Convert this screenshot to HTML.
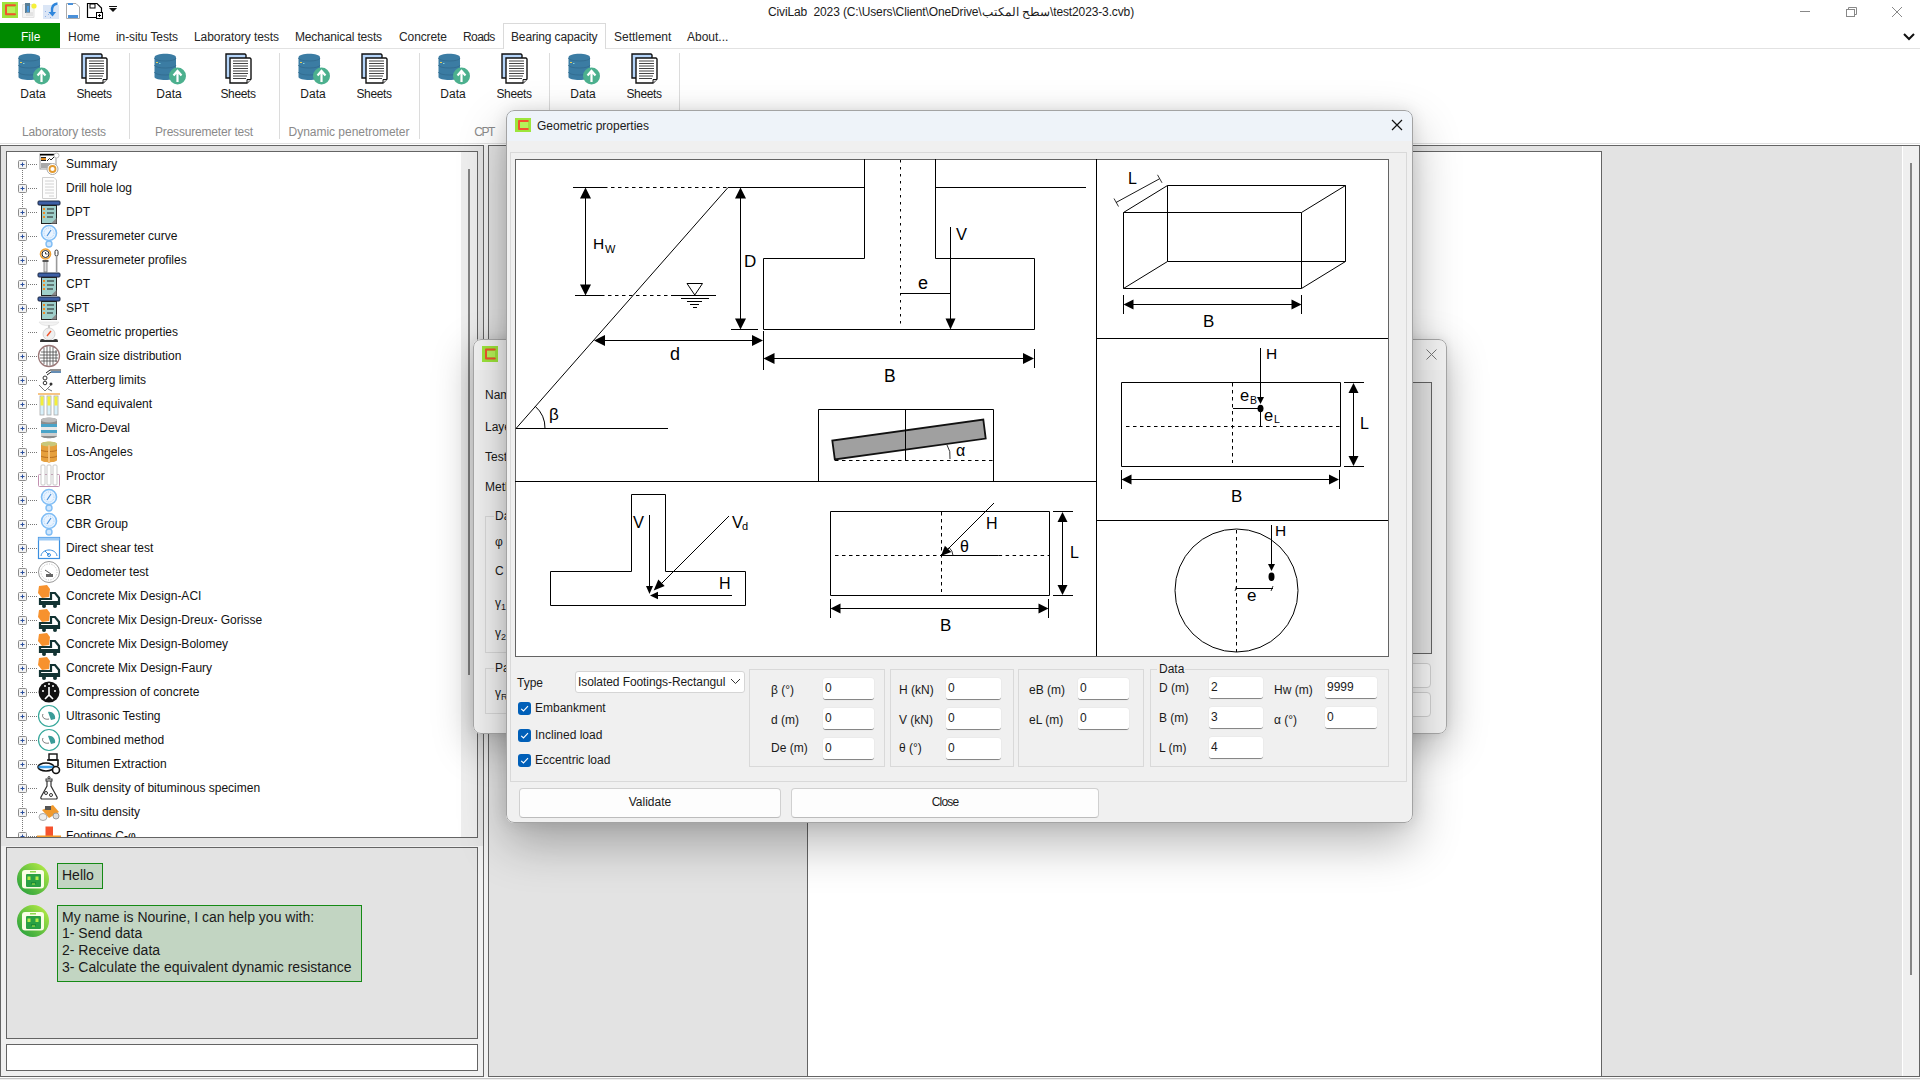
<!DOCTYPE html><html><head><meta charset="utf-8"><style>
html,body{margin:0;padding:0}
body{width:1920px;height:1080px;position:relative;overflow:hidden;background:#fff;font-family:'Liberation Sans',sans-serif}
.t{position:absolute;white-space:nowrap}
.b{position:absolute;box-sizing:border-box}
svg{position:absolute;overflow:visible}
</style></head><body>
<svg style="left:0;top:0" width="120" height="22" viewBox="0 0 120 22">
<rect x="2" y="2" width="16" height="16" fill="#9de53c"/>
<rect x="7" y="7" width="8" height="6" fill="#b6f25a"/>
<path d="M15 5.3 H6 V14.3 H15" fill="none" stroke="#f2532e" stroke-width="2" stroke-linecap="round" stroke-linejoin="round"/>
<path d="M22.5 4.5 H34 V17.5 H22.5 Z" fill="#f3f3f3" stroke="#e2e2e2"/>
<rect x="25" y="3" width="5" height="10" fill="#5a7f96"/><rect x="27" y="6" width="2" height="6" fill="#4a9ae0"/>
<path d="M26 15 H33 M26 13 H33" stroke="#ccc" stroke-width="0.8"/>
<circle cx="34" cy="6" r="2.6" fill="#f5f03a"/>
<rect x="43" y="5" width="16" height="14" fill="#dbe6f6"/>
<path d="M45 11 l1 1 M48 14 l1 1 M45 16 l1 1 M50 17 l1 1" stroke="#8fb0e8" stroke-width="1"/>
<path d="M57.5 3.5 C53 4 51.5 7 52 12" fill="none" stroke="#2f86dc" stroke-width="2.4"/>
<path d="M48.5 12 L52.5 16.5 L56 12 Z" fill="#2f86dc"/>
<path d="M66.5 3.5 H76 L79.5 7 V18.5 H66.5 Z" fill="#fff" stroke="#aaa"/>
<rect x="68" y="3" width="5" height="2" fill="#4a90d9"/>
<rect x="68" y="15" width="10" height="3" fill="#4a90d9"/>
<path d="M87.5 3.5 H97 L101.5 8 V17.5 H87.5 Z" fill="#fff" stroke="#000" stroke-width="1.2"/>
<rect x="90" y="4" width="5" height="4" fill="none" stroke="#000"/>
<rect x="96.5" y="12.5" width="6" height="6" fill="#fff" stroke="#000"/>
<path d="M99.5 14 V17 M98 15.5 H101" stroke="#000"/>
<path d="M109 8 H117 L113 12 Z" fill="#111"/><rect x="109" y="6" width="8" height="1" fill="#111"/>
</svg>
<div class="t" style="left:768px;top:6px;font-size:12px;line-height:12px;color:#1a1a1a;letter-spacing:-0.13px">CiviLab&nbsp; 2023 (C:\Users\Client\OneDrive\<span dir="rtl">سطح المكتب</span>\test2023-3.cvb)</div>
<svg style="left:1790px;top:0" width="130" height="24" viewBox="1790 0 130 24">
<path d="M1800 11.5 H1810" stroke="#888" stroke-width="1"/>
<rect x="1846.5" y="9.5" width="8" height="7" fill="none" stroke="#888"/>
<path d="M1848.5 9.5 V7.5 H1856.5 V14.5 H1854.5" fill="none" stroke="#888"/>
<path d="M1892 7 L1902 17 M1902 7 L1892 17" stroke="#888" stroke-width="1"/>
</svg>
<div class="b" style="left:0px;top:23px;width:60px;height:25px;background:#008a00"></div>
<div class="t" style="left:21px;top:31px;font-size:12px;line-height:12px;color:#fff;">File</div>
<div class="b" style="left:0px;top:48px;width:1920px;height:1px;background:#e2e2e2"></div>
<div class="b" style="left:503px;top:23px;width:103px;height:26px;background:#fff;border:1px solid #dadada;border-bottom:none"></div>
<div class="t" style="left:68px;top:31px;font-size:12px;line-height:12px;color:#262626;letter-spacing:0px">Home</div>
<div class="t" style="left:116px;top:31px;font-size:12px;line-height:12px;color:#262626;letter-spacing:-0.09px">in-situ Tests</div>
<div class="t" style="left:194px;top:31px;font-size:12px;line-height:12px;color:#262626;letter-spacing:-0.07px">Laboratory tests</div>
<div class="t" style="left:295px;top:31px;font-size:12px;line-height:12px;color:#262626;letter-spacing:-0.15px">Mechanical tests</div>
<div class="t" style="left:399px;top:31px;font-size:12px;line-height:12px;color:#262626;letter-spacing:-0.1px">Concrete</div>
<div class="t" style="left:463px;top:31px;font-size:12px;line-height:12px;color:#262626;letter-spacing:-0.6px">Roads</div>
<div class="t" style="left:511px;top:31px;font-size:12px;line-height:12px;color:#262626;letter-spacing:-0.14px">Bearing capacity</div>
<div class="t" style="left:614px;top:31px;font-size:12px;line-height:12px;color:#262626;letter-spacing:0px">Settlement</div>
<div class="t" style="left:687px;top:31px;font-size:12px;line-height:12px;color:#262626;letter-spacing:0px">About...</div>
<svg style="left:1901px;top:29px" width="16" height="14" viewBox="0 0 16 14"><path d="M3 5 L8 10 L13 5" fill="none" stroke="#111" stroke-width="2"/></svg>
<svg style="left:18px;top:53px" width="34" height="34" viewBox="0 0 34 34">
<path d="M0.5 4.5 C0.5 -0.5 22 -0.5 22 4.5 V24 C22 28 0.5 28 0.5 24 Z" fill="#3b7ca3"/>
<path d="M0.5 5 C0.5 9 22 9 22 5" fill="none" stroke="#336e92" stroke-width="1"/>
<path d="M0.5 12 C0.5 16 22 16 22 12" fill="none" stroke="#336e92" stroke-width="1"/>
<path d="M0.5 19 C0.5 23 22 23 22 19" fill="none" stroke="#336e92" stroke-width="1"/>
<rect x="2" y="9" width="2" height="1" fill="#e8d25a"/><rect x="5" y="10" width="1.5" height="1" fill="#7fd0e0"/>
<circle cx="23.5" cy="23" r="8.5" fill="#4cb08e"/>
<path d="M23.5 29 V19 M19.5 22.5 L23.5 18 L27.5 22.5" fill="none" stroke="#fff" stroke-width="2.2"/>
</svg>
<svg style="left:81px;top:53px" width="30" height="34" viewBox="0 0 30 34">
<path d="M1 1 H20 L21 2 V25 H1 Z" fill="#b5d5fa" stroke="#111" stroke-width="1.4"/>
<path d="M5 5 H25 L26 6 V26 L22 30 H5 Z" fill="#fff" stroke="#111" stroke-width="1.4"/>
<path d="M8 8 H23 M8 10.5 H23 M8 13 H23 M8 15.5 H23 M8 18 H23 M8 20.5 H23 M8 23 H22 M8 25.5 H21" stroke="#444" stroke-width="1.2"/>
<path d="M22 30 V26.5 H26" fill="#ddd" stroke="#111" stroke-width="1"/>
</svg>
<div class="t" style="left:-167px;width:400px;text-align:center;top:88px;font-size:12px;line-height:12px;color:#1a1a1a;">Data</div>
<div class="t" style="left:-106px;width:400px;text-align:center;top:88px;font-size:12px;line-height:12px;color:#1a1a1a;letter-spacing:-0.4px">Sheets</div>
<svg style="left:154px;top:53px" width="34" height="34" viewBox="0 0 34 34">
<path d="M0.5 4.5 C0.5 -0.5 22 -0.5 22 4.5 V24 C22 28 0.5 28 0.5 24 Z" fill="#3b7ca3"/>
<path d="M0.5 5 C0.5 9 22 9 22 5" fill="none" stroke="#336e92" stroke-width="1"/>
<path d="M0.5 12 C0.5 16 22 16 22 12" fill="none" stroke="#336e92" stroke-width="1"/>
<path d="M0.5 19 C0.5 23 22 23 22 19" fill="none" stroke="#336e92" stroke-width="1"/>
<rect x="2" y="9" width="2" height="1" fill="#e8d25a"/><rect x="5" y="10" width="1.5" height="1" fill="#7fd0e0"/>
<circle cx="23.5" cy="23" r="8.5" fill="#4cb08e"/>
<path d="M23.5 29 V19 M19.5 22.5 L23.5 18 L27.5 22.5" fill="none" stroke="#fff" stroke-width="2.2"/>
</svg>
<svg style="left:225px;top:53px" width="30" height="34" viewBox="0 0 30 34">
<path d="M1 1 H20 L21 2 V25 H1 Z" fill="#b5d5fa" stroke="#111" stroke-width="1.4"/>
<path d="M5 5 H25 L26 6 V26 L22 30 H5 Z" fill="#fff" stroke="#111" stroke-width="1.4"/>
<path d="M8 8 H23 M8 10.5 H23 M8 13 H23 M8 15.5 H23 M8 18 H23 M8 20.5 H23 M8 23 H22 M8 25.5 H21" stroke="#444" stroke-width="1.2"/>
<path d="M22 30 V26.5 H26" fill="#ddd" stroke="#111" stroke-width="1"/>
</svg>
<div class="t" style="left:-31px;width:400px;text-align:center;top:88px;font-size:12px;line-height:12px;color:#1a1a1a;">Data</div>
<div class="t" style="left:38px;width:400px;text-align:center;top:88px;font-size:12px;line-height:12px;color:#1a1a1a;letter-spacing:-0.4px">Sheets</div>
<svg style="left:298px;top:53px" width="34" height="34" viewBox="0 0 34 34">
<path d="M0.5 4.5 C0.5 -0.5 22 -0.5 22 4.5 V24 C22 28 0.5 28 0.5 24 Z" fill="#3b7ca3"/>
<path d="M0.5 5 C0.5 9 22 9 22 5" fill="none" stroke="#336e92" stroke-width="1"/>
<path d="M0.5 12 C0.5 16 22 16 22 12" fill="none" stroke="#336e92" stroke-width="1"/>
<path d="M0.5 19 C0.5 23 22 23 22 19" fill="none" stroke="#336e92" stroke-width="1"/>
<rect x="2" y="9" width="2" height="1" fill="#e8d25a"/><rect x="5" y="10" width="1.5" height="1" fill="#7fd0e0"/>
<circle cx="23.5" cy="23" r="8.5" fill="#4cb08e"/>
<path d="M23.5 29 V19 M19.5 22.5 L23.5 18 L27.5 22.5" fill="none" stroke="#fff" stroke-width="2.2"/>
</svg>
<svg style="left:361px;top:53px" width="30" height="34" viewBox="0 0 30 34">
<path d="M1 1 H20 L21 2 V25 H1 Z" fill="#b5d5fa" stroke="#111" stroke-width="1.4"/>
<path d="M5 5 H25 L26 6 V26 L22 30 H5 Z" fill="#fff" stroke="#111" stroke-width="1.4"/>
<path d="M8 8 H23 M8 10.5 H23 M8 13 H23 M8 15.5 H23 M8 18 H23 M8 20.5 H23 M8 23 H22 M8 25.5 H21" stroke="#444" stroke-width="1.2"/>
<path d="M22 30 V26.5 H26" fill="#ddd" stroke="#111" stroke-width="1"/>
</svg>
<div class="t" style="left:113px;width:400px;text-align:center;top:88px;font-size:12px;line-height:12px;color:#1a1a1a;">Data</div>
<div class="t" style="left:174px;width:400px;text-align:center;top:88px;font-size:12px;line-height:12px;color:#1a1a1a;letter-spacing:-0.4px">Sheets</div>
<svg style="left:438px;top:53px" width="34" height="34" viewBox="0 0 34 34">
<path d="M0.5 4.5 C0.5 -0.5 22 -0.5 22 4.5 V24 C22 28 0.5 28 0.5 24 Z" fill="#3b7ca3"/>
<path d="M0.5 5 C0.5 9 22 9 22 5" fill="none" stroke="#336e92" stroke-width="1"/>
<path d="M0.5 12 C0.5 16 22 16 22 12" fill="none" stroke="#336e92" stroke-width="1"/>
<path d="M0.5 19 C0.5 23 22 23 22 19" fill="none" stroke="#336e92" stroke-width="1"/>
<rect x="2" y="9" width="2" height="1" fill="#e8d25a"/><rect x="5" y="10" width="1.5" height="1" fill="#7fd0e0"/>
<circle cx="23.5" cy="23" r="8.5" fill="#4cb08e"/>
<path d="M23.5 29 V19 M19.5 22.5 L23.5 18 L27.5 22.5" fill="none" stroke="#fff" stroke-width="2.2"/>
</svg>
<svg style="left:501px;top:53px" width="30" height="34" viewBox="0 0 30 34">
<path d="M1 1 H20 L21 2 V25 H1 Z" fill="#b5d5fa" stroke="#111" stroke-width="1.4"/>
<path d="M5 5 H25 L26 6 V26 L22 30 H5 Z" fill="#fff" stroke="#111" stroke-width="1.4"/>
<path d="M8 8 H23 M8 10.5 H23 M8 13 H23 M8 15.5 H23 M8 18 H23 M8 20.5 H23 M8 23 H22 M8 25.5 H21" stroke="#444" stroke-width="1.2"/>
<path d="M22 30 V26.5 H26" fill="#ddd" stroke="#111" stroke-width="1"/>
</svg>
<div class="t" style="left:253px;width:400px;text-align:center;top:88px;font-size:12px;line-height:12px;color:#1a1a1a;">Data</div>
<div class="t" style="left:314px;width:400px;text-align:center;top:88px;font-size:12px;line-height:12px;color:#1a1a1a;letter-spacing:-0.4px">Sheets</div>
<svg style="left:568px;top:53px" width="34" height="34" viewBox="0 0 34 34">
<path d="M0.5 4.5 C0.5 -0.5 22 -0.5 22 4.5 V24 C22 28 0.5 28 0.5 24 Z" fill="#3b7ca3"/>
<path d="M0.5 5 C0.5 9 22 9 22 5" fill="none" stroke="#336e92" stroke-width="1"/>
<path d="M0.5 12 C0.5 16 22 16 22 12" fill="none" stroke="#336e92" stroke-width="1"/>
<path d="M0.5 19 C0.5 23 22 23 22 19" fill="none" stroke="#336e92" stroke-width="1"/>
<rect x="2" y="9" width="2" height="1" fill="#e8d25a"/><rect x="5" y="10" width="1.5" height="1" fill="#7fd0e0"/>
<circle cx="23.5" cy="23" r="8.5" fill="#4cb08e"/>
<path d="M23.5 29 V19 M19.5 22.5 L23.5 18 L27.5 22.5" fill="none" stroke="#fff" stroke-width="2.2"/>
</svg>
<svg style="left:631px;top:53px" width="30" height="34" viewBox="0 0 30 34">
<path d="M1 1 H20 L21 2 V25 H1 Z" fill="#b5d5fa" stroke="#111" stroke-width="1.4"/>
<path d="M5 5 H25 L26 6 V26 L22 30 H5 Z" fill="#fff" stroke="#111" stroke-width="1.4"/>
<path d="M8 8 H23 M8 10.5 H23 M8 13 H23 M8 15.5 H23 M8 18 H23 M8 20.5 H23 M8 23 H22 M8 25.5 H21" stroke="#444" stroke-width="1.2"/>
<path d="M22 30 V26.5 H26" fill="#ddd" stroke="#111" stroke-width="1"/>
</svg>
<div class="t" style="left:383px;width:400px;text-align:center;top:88px;font-size:12px;line-height:12px;color:#1a1a1a;">Data</div>
<div class="t" style="left:444px;width:400px;text-align:center;top:88px;font-size:12px;line-height:12px;color:#1a1a1a;letter-spacing:-0.4px">Sheets</div>
<div class="b" style="left:129px;top:53px;width:1px;height:86px;background:#dcdcdc"></div>
<div class="b" style="left:279px;top:53px;width:1px;height:86px;background:#dcdcdc"></div>
<div class="b" style="left:419px;top:53px;width:1px;height:86px;background:#dcdcdc"></div>
<div class="b" style="left:549px;top:53px;width:1px;height:86px;background:#dcdcdc"></div>
<div class="b" style="left:679px;top:53px;width:1px;height:86px;background:#dcdcdc"></div>
<div class="t" style="left:-136px;width:400px;text-align:center;top:126px;font-size:12px;line-height:12px;color:#8a8a8a;letter-spacing:-0.13px">Laboratory tests</div>
<div class="t" style="left:4px;width:400px;text-align:center;top:126px;font-size:12px;line-height:12px;color:#8a8a8a;letter-spacing:-0.19px">Pressuremeter test</div>
<div class="t" style="left:149px;width:400px;text-align:center;top:126px;font-size:12px;line-height:12px;color:#8a8a8a;letter-spacing:-0.02px">Dynamic penetrometer</div>
<div class="t" style="left:284px;width:400px;text-align:center;top:126px;font-size:12px;line-height:12px;color:#8a8a8a;letter-spacing:-1.5px">CPT</div>
<div class="b" style="left:0px;top:143px;width:1920px;height:1px;background:#e0e0e0"></div>
<div class="b" style="left:0px;top:145px;width:1920px;height:935px;background:#f0f0f0"></div>
<div class="b" style="left:0px;top:145px;width:484px;height:932px;background:#e3e3e3;border:1px solid #646464;border-right:1px solid #646464"></div>
<div class="b" style="left:1px;top:846px;width:482px;height:230px;background:#f0f0f0"></div>
<div class="b" style="left:6px;top:151px;width:472px;height:687px;background:#fff;border:1px solid #646464"></div>
<div class="b" style="left:461px;top:152px;width:16px;height:685px;background:#eeeeee"></div>
<div class="b" style="left:468px;top:169px;width:2px;height:506px;background:#858585"></div>
<div class="b" style="left:7px;top:152px;width:454px;height:685px;overflow:hidden">
<svg style="left:0;top:0" width="454" height="685" viewBox="7 152 454 685"><path d="M22.5 170 V840" stroke="#777" stroke-width="1" stroke-dasharray="1 1"/><path d="M28 164.5 H37" stroke="#777" stroke-width="1" stroke-dasharray="1 1"/><rect x="18.5" y="160.5" width="8" height="8" rx="1" fill="#f4f4f4" stroke="#8d8d8d"/><path d="M20.5 164.5 H24.5 M22.5 162.5 V166.5" stroke="#2a4f9e" stroke-width="1"/><path d="M28 188.5 H37" stroke="#777" stroke-width="1" stroke-dasharray="1 1"/><rect x="18.5" y="184.5" width="8" height="8" rx="1" fill="#f4f4f4" stroke="#8d8d8d"/><path d="M20.5 188.5 H24.5 M22.5 186.5 V190.5" stroke="#2a4f9e" stroke-width="1"/><path d="M28 212.5 H37" stroke="#777" stroke-width="1" stroke-dasharray="1 1"/><rect x="18.5" y="208.5" width="8" height="8" rx="1" fill="#f4f4f4" stroke="#8d8d8d"/><path d="M20.5 212.5 H24.5 M22.5 210.5 V214.5" stroke="#2a4f9e" stroke-width="1"/><path d="M28 236.5 H37" stroke="#777" stroke-width="1" stroke-dasharray="1 1"/><rect x="18.5" y="232.5" width="8" height="8" rx="1" fill="#f4f4f4" stroke="#8d8d8d"/><path d="M20.5 236.5 H24.5 M22.5 234.5 V238.5" stroke="#2a4f9e" stroke-width="1"/><path d="M28 260.5 H37" stroke="#777" stroke-width="1" stroke-dasharray="1 1"/><rect x="18.5" y="256.5" width="8" height="8" rx="1" fill="#f4f4f4" stroke="#8d8d8d"/><path d="M20.5 260.5 H24.5 M22.5 258.5 V262.5" stroke="#2a4f9e" stroke-width="1"/><path d="M28 284.5 H37" stroke="#777" stroke-width="1" stroke-dasharray="1 1"/><rect x="18.5" y="280.5" width="8" height="8" rx="1" fill="#f4f4f4" stroke="#8d8d8d"/><path d="M20.5 284.5 H24.5 M22.5 282.5 V286.5" stroke="#2a4f9e" stroke-width="1"/><path d="M28 308.5 H37" stroke="#777" stroke-width="1" stroke-dasharray="1 1"/><rect x="18.5" y="304.5" width="8" height="8" rx="1" fill="#f4f4f4" stroke="#8d8d8d"/><path d="M20.5 308.5 H24.5 M22.5 306.5 V310.5" stroke="#2a4f9e" stroke-width="1"/><path d="M28 332.5 H37" stroke="#777" stroke-width="1" stroke-dasharray="1 1"/><path d="M28 356.5 H37" stroke="#777" stroke-width="1" stroke-dasharray="1 1"/><rect x="18.5" y="352.5" width="8" height="8" rx="1" fill="#f4f4f4" stroke="#8d8d8d"/><path d="M20.5 356.5 H24.5 M22.5 354.5 V358.5" stroke="#2a4f9e" stroke-width="1"/><path d="M28 380.5 H37" stroke="#777" stroke-width="1" stroke-dasharray="1 1"/><rect x="18.5" y="376.5" width="8" height="8" rx="1" fill="#f4f4f4" stroke="#8d8d8d"/><path d="M20.5 380.5 H24.5 M22.5 378.5 V382.5" stroke="#2a4f9e" stroke-width="1"/><path d="M28 404.5 H37" stroke="#777" stroke-width="1" stroke-dasharray="1 1"/><rect x="18.5" y="400.5" width="8" height="8" rx="1" fill="#f4f4f4" stroke="#8d8d8d"/><path d="M20.5 404.5 H24.5 M22.5 402.5 V406.5" stroke="#2a4f9e" stroke-width="1"/><path d="M28 428.5 H37" stroke="#777" stroke-width="1" stroke-dasharray="1 1"/><rect x="18.5" y="424.5" width="8" height="8" rx="1" fill="#f4f4f4" stroke="#8d8d8d"/><path d="M20.5 428.5 H24.5 M22.5 426.5 V430.5" stroke="#2a4f9e" stroke-width="1"/><path d="M28 452.5 H37" stroke="#777" stroke-width="1" stroke-dasharray="1 1"/><rect x="18.5" y="448.5" width="8" height="8" rx="1" fill="#f4f4f4" stroke="#8d8d8d"/><path d="M20.5 452.5 H24.5 M22.5 450.5 V454.5" stroke="#2a4f9e" stroke-width="1"/><path d="M28 476.5 H37" stroke="#777" stroke-width="1" stroke-dasharray="1 1"/><rect x="18.5" y="472.5" width="8" height="8" rx="1" fill="#f4f4f4" stroke="#8d8d8d"/><path d="M20.5 476.5 H24.5 M22.5 474.5 V478.5" stroke="#2a4f9e" stroke-width="1"/><path d="M28 500.5 H37" stroke="#777" stroke-width="1" stroke-dasharray="1 1"/><rect x="18.5" y="496.5" width="8" height="8" rx="1" fill="#f4f4f4" stroke="#8d8d8d"/><path d="M20.5 500.5 H24.5 M22.5 498.5 V502.5" stroke="#2a4f9e" stroke-width="1"/><path d="M28 524.5 H37" stroke="#777" stroke-width="1" stroke-dasharray="1 1"/><rect x="18.5" y="520.5" width="8" height="8" rx="1" fill="#f4f4f4" stroke="#8d8d8d"/><path d="M20.5 524.5 H24.5 M22.5 522.5 V526.5" stroke="#2a4f9e" stroke-width="1"/><path d="M28 548.5 H37" stroke="#777" stroke-width="1" stroke-dasharray="1 1"/><rect x="18.5" y="544.5" width="8" height="8" rx="1" fill="#f4f4f4" stroke="#8d8d8d"/><path d="M20.5 548.5 H24.5 M22.5 546.5 V550.5" stroke="#2a4f9e" stroke-width="1"/><path d="M28 572.5 H37" stroke="#777" stroke-width="1" stroke-dasharray="1 1"/><rect x="18.5" y="568.5" width="8" height="8" rx="1" fill="#f4f4f4" stroke="#8d8d8d"/><path d="M20.5 572.5 H24.5 M22.5 570.5 V574.5" stroke="#2a4f9e" stroke-width="1"/><path d="M28 596.5 H37" stroke="#777" stroke-width="1" stroke-dasharray="1 1"/><rect x="18.5" y="592.5" width="8" height="8" rx="1" fill="#f4f4f4" stroke="#8d8d8d"/><path d="M20.5 596.5 H24.5 M22.5 594.5 V598.5" stroke="#2a4f9e" stroke-width="1"/><path d="M28 620.5 H37" stroke="#777" stroke-width="1" stroke-dasharray="1 1"/><rect x="18.5" y="616.5" width="8" height="8" rx="1" fill="#f4f4f4" stroke="#8d8d8d"/><path d="M20.5 620.5 H24.5 M22.5 618.5 V622.5" stroke="#2a4f9e" stroke-width="1"/><path d="M28 644.5 H37" stroke="#777" stroke-width="1" stroke-dasharray="1 1"/><rect x="18.5" y="640.5" width="8" height="8" rx="1" fill="#f4f4f4" stroke="#8d8d8d"/><path d="M20.5 644.5 H24.5 M22.5 642.5 V646.5" stroke="#2a4f9e" stroke-width="1"/><path d="M28 668.5 H37" stroke="#777" stroke-width="1" stroke-dasharray="1 1"/><rect x="18.5" y="664.5" width="8" height="8" rx="1" fill="#f4f4f4" stroke="#8d8d8d"/><path d="M20.5 668.5 H24.5 M22.5 666.5 V670.5" stroke="#2a4f9e" stroke-width="1"/><path d="M28 692.5 H37" stroke="#777" stroke-width="1" stroke-dasharray="1 1"/><rect x="18.5" y="688.5" width="8" height="8" rx="1" fill="#f4f4f4" stroke="#8d8d8d"/><path d="M20.5 692.5 H24.5 M22.5 690.5 V694.5" stroke="#2a4f9e" stroke-width="1"/><path d="M28 716.5 H37" stroke="#777" stroke-width="1" stroke-dasharray="1 1"/><rect x="18.5" y="712.5" width="8" height="8" rx="1" fill="#f4f4f4" stroke="#8d8d8d"/><path d="M20.5 716.5 H24.5 M22.5 714.5 V718.5" stroke="#2a4f9e" stroke-width="1"/><path d="M28 740.5 H37" stroke="#777" stroke-width="1" stroke-dasharray="1 1"/><rect x="18.5" y="736.5" width="8" height="8" rx="1" fill="#f4f4f4" stroke="#8d8d8d"/><path d="M20.5 740.5 H24.5 M22.5 738.5 V742.5" stroke="#2a4f9e" stroke-width="1"/><path d="M28 764.5 H37" stroke="#777" stroke-width="1" stroke-dasharray="1 1"/><rect x="18.5" y="760.5" width="8" height="8" rx="1" fill="#f4f4f4" stroke="#8d8d8d"/><path d="M20.5 764.5 H24.5 M22.5 762.5 V766.5" stroke="#2a4f9e" stroke-width="1"/><path d="M28 788.5 H37" stroke="#777" stroke-width="1" stroke-dasharray="1 1"/><rect x="18.5" y="784.5" width="8" height="8" rx="1" fill="#f4f4f4" stroke="#8d8d8d"/><path d="M20.5 788.5 H24.5 M22.5 786.5 V790.5" stroke="#2a4f9e" stroke-width="1"/><path d="M28 812.5 H37" stroke="#777" stroke-width="1" stroke-dasharray="1 1"/><rect x="18.5" y="808.5" width="8" height="8" rx="1" fill="#f4f4f4" stroke="#8d8d8d"/><path d="M20.5 812.5 H24.5 M22.5 810.5 V814.5" stroke="#2a4f9e" stroke-width="1"/><path d="M28 836.5 H37" stroke="#777" stroke-width="1" stroke-dasharray="1 1"/><rect x="18.5" y="832.5" width="8" height="8" rx="1" fill="#f4f4f4" stroke="#8d8d8d"/><path d="M20.5 836.5 H24.5 M22.5 834.5 V838.5" stroke="#2a4f9e" stroke-width="1"/></svg>
</div>
<div class="b" style="left:7px;top:152px;width:454px;height:685px;overflow:hidden"><svg style="left:0;top:0" width="454" height="685" viewBox="7 152 454 685"><g transform="translate(37,152)"><rect x="3" y="2" width="16" height="15" fill="#fff" stroke="#999"/><rect x="3" y="2" width="16" height="1.5" fill="#000"/><rect x="4" y="5" width="5" height="3" fill="#e08a1e"/><rect x="4" y="5" width="5" height="1" fill="#222"/><rect x="4" y="8" width="5" height="1" fill="#222"/><path d="M10 9 L12.5 6.5 L14 8 L18 4" fill="none" stroke="#222" stroke-width="1"/><rect x="4" y="11" width="10" height="5" fill="#a9a9a9"/><circle cx="19.5" cy="3.5" r="2.5" fill="#fff" stroke="#bbb"/><circle cx="15.5" cy="17" r="5.5" fill="#fff" stroke="#aaa"/><circle cx="15.5" cy="17" r="3" fill="none" stroke="#e39a2e" stroke-width="1.8"/></g><g transform="translate(37,176)"><path d="M5.5 1.5 H17 L19.5 4 V22.5 H5.5 Z" fill="#fdfdfd" stroke="#cfcfcf"/><path d="M8 5 H17 M8 8 H17 M8 11 H17 M8 14 H17 M8 17 H17 M12 20 H17" stroke="#d2d2d2" stroke-width="1"/></g><g transform="translate(37,200)"><rect x="1" y="1" width="22" height="4" rx="1" fill="#3d5fa5" stroke="#1d2a44" stroke-width="1"/><rect x="4.5" y="5.5" width="15" height="18" fill="#9fcfca" stroke="#222" stroke-width="1"/><path d="M14 23.5 L19.5 18 V23.5 Z" fill="#888"/><rect x="6" y="8" width="2" height="2" fill="#f08a24"/><rect x="6" y="12" width="2" height="2" fill="#f08a24"/><rect x="6" y="16" width="2" height="2" fill="#f08a24"/><path d="M10 9 H17 M10 13 H17 M10 17 H16" stroke="#222" stroke-width="1.2"/></g><g transform="translate(37,224)"><circle cx="12" cy="9" r="7.5" fill="#eaf4ff" stroke="#7fbdf5" stroke-width="1.6"/><circle cx="12" cy="9" r="5" fill="none" stroke="#a9d3fa" stroke-width="1" stroke-dasharray="1 1"/><path d="M10 12 L14 6" stroke="#4a90d9" stroke-width="1.2"/><circle cx="12" cy="20" r="3" fill="#cfe6fd" stroke="#7fbdf5" stroke-width="1.4"/></g><g transform="translate(37,248)"><circle cx="8.5" cy="6" r="5" fill="#fff" stroke="#f0a030" stroke-width="1.6"/><circle cx="8.5" cy="6" r="3.5" fill="none" stroke="#222" stroke-width="1"/><path d="M8.5 4 V6 H10.5" stroke="#222" stroke-width="0.8" fill="none"/><rect x="7" y="13" width="3" height="11" fill="#ddd" stroke="#777" stroke-width="0.8"/><rect x="5.5" y="12" width="6" height="2" fill="#555"/><rect x="18" y="2" width="3" height="6" rx="1.5" fill="#fff" stroke="#333" stroke-width="1"/><rect x="18.8" y="8" width="1.6" height="16" fill="#999"/></g><g transform="translate(37,272)"><rect x="1" y="1" width="22" height="4" rx="1" fill="#3d5fa5" stroke="#1d2a44" stroke-width="1"/><rect x="4.5" y="5.5" width="15" height="18" fill="#9fcfca" stroke="#222" stroke-width="1"/><path d="M14 23.5 L19.5 18 V23.5 Z" fill="#888"/><rect x="6" y="8" width="2" height="2" fill="#f08a24"/><rect x="6" y="12" width="2" height="2" fill="#f08a24"/><rect x="6" y="16" width="2" height="2" fill="#f08a24"/><path d="M10 9 H17 M10 13 H17 M10 17 H16" stroke="#222" stroke-width="1.2"/></g><g transform="translate(37,296)"><rect x="1" y="1" width="22" height="4" rx="1" fill="#3d5fa5" stroke="#1d2a44" stroke-width="1"/><rect x="4.5" y="5.5" width="15" height="18" fill="#9fcfca" stroke="#222" stroke-width="1"/><path d="M14 23.5 L19.5 18 V23.5 Z" fill="#888"/><rect x="6" y="8" width="2" height="2" fill="#f08a24"/><rect x="6" y="12" width="2" height="2" fill="#f08a24"/><rect x="6" y="16" width="2" height="2" fill="#f08a24"/><path d="M10 9 H17 M10 13 H17 M10 17 H16" stroke="#222" stroke-width="1.2"/></g><g transform="translate(37,320)"><path d="M2 2 C4 7 20 7 22 2 Z" fill="#f2f2f2" stroke="#ddd" stroke-width="0.6"/><rect x="11" y="5" width="2" height="3" fill="#ccc"/><circle cx="12" cy="14" r="6" fill="#efefef" stroke="#ccc" stroke-width="0.8"/><path d="M10 16 L14 11" stroke="#f0552d" stroke-width="1.4"/><path d="M3 22 C3 18 6 19 8 20 H16 C18 19 21 18 21 22 Z" fill="#333"/></g><g transform="translate(37,344)"><circle cx="12" cy="12" r="10.5" fill="#fff" stroke="#9a7777" stroke-width="1.3"/><path d="M4 8 H20 M3 11 H21 M3 14 H21 M4 17 H20 M7 4 V20 M10 2.5 V21.5 M13 2.5 V21.5 M16 3 V21 M19 6 V18" stroke="#333" stroke-width="0.7"/></g><g transform="translate(37,368)"><path d="M9 5 L13 2 H24 M10 7 L14 4 H24" fill="none" stroke="#222" stroke-width="1"/><path d="M14 4 H24" stroke="#3a8ad8" stroke-width="1"/><circle cx="8" cy="10" r="2" fill="none" stroke="#333" stroke-width="1"/><circle cx="8" cy="15" r="1.8" fill="none" stroke="#333" stroke-width="1"/><circle cx="14" cy="16" r="1.5" fill="#333"/><path d="M2 17 L8 23 L14 17 M11 21 L15 23" fill="none" stroke="#555" stroke-width="0.8"/></g><g transform="translate(37,392)"><path d="M1 2 H23" stroke="#f3b25e" stroke-width="1.5"/><rect x="3" y="4" width="4" height="19" fill="#d8f1fb" stroke="#aaa" stroke-width="0.8"/><rect x="3.5" y="4.5" width="3" height="9" fill="#f4ee3b"/><rect x="10" y="4" width="4" height="19" fill="#d8f1fb" stroke="#aaa" stroke-width="0.8"/><rect x="10.5" y="4.5" width="3" height="9" fill="#f4ee3b"/><rect x="17" y="4" width="4" height="19" fill="#d8f1fb" stroke="#aaa" stroke-width="0.8"/><rect x="17.5" y="4.5" width="3" height="9" fill="#f4ee3b"/></g><g transform="translate(37,416)"><path d="M4 4 C4 1 20 1 20 4 V20 C20 23 4 23 4 20 Z" fill="#8d8d8d"/><ellipse cx="12" cy="4" rx="8" ry="2.5" fill="#bdbdbd"/><rect x="4" y="8" width="16" height="3" fill="#4aa3c8"/><rect x="4" y="14" width="16" height="3" fill="#4aa3c8"/><rect x="4" y="11" width="16" height="3" fill="#e8e8e8"/><rect x="4" y="17" width="16" height="3" fill="#cfcfcf"/></g><g transform="translate(37,440)"><path d="M4 4 C4 1 20 1 20 4 V20 C20 23 4 23 4 20 Z" fill="#e6a03d"/><ellipse cx="12" cy="4" rx="8" ry="2.5" fill="#c9c77a"/><path d="M4 10 C6 12 18 12 20 10 M4 16 C6 18 18 18 20 16" fill="none" stroke="#b86e1e" stroke-width="1"/><rect x="11" y="5" width="2" height="18" fill="#f5c27a"/></g><g transform="translate(37,464)"><rect x="1.5" y="10.5" width="21" height="12" rx="1" fill="#fff" stroke="#c290b0"/><rect x="4" y="1" width="4" height="20" rx="1" fill="#fff" stroke="#bbb" stroke-width="0.8"/><rect x="10" y="1" width="4" height="20" rx="1" fill="#fff" stroke="#bbb" stroke-width="0.8"/><rect x="16" y="1" width="4" height="20" rx="1" fill="#fff" stroke="#bbb" stroke-width="0.8"/></g><g transform="translate(37,488)"><circle cx="12" cy="9" r="7.5" fill="#eaf4ff" stroke="#7fbdf5" stroke-width="1.6"/><circle cx="12" cy="9" r="5" fill="none" stroke="#a9d3fa" stroke-width="1" stroke-dasharray="1 1"/><path d="M10 12 L14 6" stroke="#4a90d9" stroke-width="1.2"/><circle cx="12" cy="20" r="3" fill="#cfe6fd" stroke="#7fbdf5" stroke-width="1.4"/></g><g transform="translate(37,512)"><circle cx="12" cy="9" r="7.5" fill="#eaf4ff" stroke="#7fbdf5" stroke-width="1.6"/><circle cx="12" cy="9" r="5" fill="none" stroke="#a9d3fa" stroke-width="1" stroke-dasharray="1 1"/><path d="M10 12 L14 6" stroke="#4a90d9" stroke-width="1.2"/><circle cx="12" cy="20" r="3" fill="#cfe6fd" stroke="#7fbdf5" stroke-width="1.4"/></g><g transform="translate(37,536)"><rect x="1.5" y="1.5" width="21" height="21" fill="#fff" stroke="#3b8fe0" stroke-width="1.2"/><rect x="1.5" y="1.5" width="21" height="3" fill="#9ccaf5"/><path d="M4 20 C5 12 19 12 20 20" fill="none" stroke="#3b8fe0" stroke-width="1"/><circle cx="12" cy="19" r="1.5" fill="none" stroke="#3b8fe0"/><path d="M12 19 L8 15" stroke="#3b8fe0"/></g><g transform="translate(37,560)"><circle cx="12" cy="12" r="10.5" fill="#fff" stroke="#999" stroke-width="1"/><circle cx="12" cy="12" r="8" fill="none" stroke="#bbb" stroke-width="1" stroke-dasharray="1 1.5"/><path d="M8 10 L14 14" stroke="#555" stroke-width="1"/><rect x="9" y="14" width="7" height="3" fill="#666"/></g><g transform="translate(37,584)"><path d="M2 2 L10 1 L13 5 L12 13 L5 14 L1 9 Z" fill="#f7922e"/><path d="M3 15 H14 V9 H18 L22 14 V20 H3 Z" fill="none" stroke="#123333" stroke-width="2.2"/><rect x="2" y="17" width="20" height="3" fill="#123333"/><circle cx="7" cy="22" r="2" fill="#123333"/><circle cx="18" cy="22" r="2" fill="#123333"/></g><g transform="translate(37,608)"><path d="M2 2 L10 1 L13 5 L12 13 L5 14 L1 9 Z" fill="#f7922e"/><path d="M3 15 H14 V9 H18 L22 14 V20 H3 Z" fill="none" stroke="#123333" stroke-width="2.2"/><rect x="2" y="17" width="20" height="3" fill="#123333"/><circle cx="7" cy="22" r="2" fill="#123333"/><circle cx="18" cy="22" r="2" fill="#123333"/></g><g transform="translate(37,632)"><path d="M2 2 L10 1 L13 5 L12 13 L5 14 L1 9 Z" fill="#f7922e"/><path d="M3 15 H14 V9 H18 L22 14 V20 H3 Z" fill="none" stroke="#123333" stroke-width="2.2"/><rect x="2" y="17" width="20" height="3" fill="#123333"/><circle cx="7" cy="22" r="2" fill="#123333"/><circle cx="18" cy="22" r="2" fill="#123333"/></g><g transform="translate(37,656)"><path d="M2 2 L10 1 L13 5 L12 13 L5 14 L1 9 Z" fill="#f7922e"/><path d="M3 15 H14 V9 H18 L22 14 V20 H3 Z" fill="none" stroke="#123333" stroke-width="2.2"/><rect x="2" y="17" width="20" height="3" fill="#123333"/><circle cx="7" cy="22" r="2" fill="#123333"/><circle cx="18" cy="22" r="2" fill="#123333"/></g><g transform="translate(37,680)"><circle cx="12" cy="12" r="10.5" fill="#111"/><path d="M12 7 V15 M8 19 L12 15 L16 19" stroke="#fff" stroke-width="1.6" fill="none"/><circle cx="6" cy="11" r="1" fill="#fff"/><circle cx="18" cy="11" r="1" fill="#fff"/><circle cx="8" cy="6" r="1" fill="#fff"/><circle cx="16" cy="6" r="1" fill="#fff"/><circle cx="12" cy="4" r="1" fill="#fff"/></g><g transform="translate(37,704)"><circle cx="12" cy="12" r="10.5" fill="#fff" stroke="#35a79a" stroke-width="1.2"/><path d="M11 8 C15 7 19 11 18 15 L14 16 Z" fill="#3a9c98"/><path d="M6 10 C4 14 9 16 12 15" fill="none" stroke="#555" stroke-width="0.8"/></g><g transform="translate(37,728)"><circle cx="12" cy="12" r="10.5" fill="#fff" stroke="#35a79a" stroke-width="1.2"/><path d="M11 8 C15 7 19 11 18 15 L14 16 Z" fill="#3a9c98"/><path d="M6 10 C4 14 9 16 12 15" fill="none" stroke="#555" stroke-width="0.8"/></g><g transform="translate(37,752)"><rect x="12" y="2" width="8" height="6" fill="none" stroke="#111" stroke-width="1.4"/><path d="M10 8 H21 V14" fill="none" stroke="#111" stroke-width="1.6"/><ellipse cx="9" cy="15" rx="8" ry="4" fill="#fff" stroke="#111" stroke-width="1.6"/><path d="M1.5 15 H16.5" stroke="#3d9ee8" stroke-width="2.5"/><circle cx="19" cy="18" r="3.5" fill="#fff" stroke="#111" stroke-width="1.6"/></g><g transform="translate(37,776)"><path d="M10 5 V10 L4 21 C3.5 22 4 23 5 23 H19 C20 23 20.5 22 20 21 L14 10 V5" fill="#fff" stroke="#333" stroke-width="1.2"/><rect x="9" y="3" width="6" height="2" fill="#fff" stroke="#333"/><circle cx="12" cy="1.5" r="1" fill="none" stroke="#333"/><circle cx="9" cy="17" r="1.5" fill="none" stroke="#333"/><circle cx="14" cy="19" r="1.5" fill="none" stroke="#333"/></g><g transform="translate(37,800)"><path d="M5 10 L16 5 L22 12 L12 18 Z" fill="#f09a2e"/><rect x="8" y="6" width="6" height="4" fill="#555"/><ellipse cx="6" cy="17" rx="4" ry="3.5" fill="#eee" stroke="#aaa"/><ellipse cx="19" cy="16" rx="3" ry="3" fill="#ddd" stroke="#999"/></g><g transform="translate(37,824)"><rect x="8.5" y="2.5" width="7.5" height="10" fill="#f5522d"/><rect x="0" y="11.5" width="24" height="1.5" fill="#f39a2c"/></g></svg><div class="t" style="left:59px;top:6px;font-size:12px;line-height:12px;color:#111">Summary</div><div class="t" style="left:59px;top:30px;font-size:12px;line-height:12px;color:#111">Drill hole log</div><div class="t" style="left:59px;top:54px;font-size:12px;line-height:12px;color:#111">DPT</div><div class="t" style="left:59px;top:78px;font-size:12px;line-height:12px;color:#111">Pressuremeter curve</div><div class="t" style="left:59px;top:102px;font-size:12px;line-height:12px;color:#111">Pressuremeter profiles</div><div class="t" style="left:59px;top:126px;font-size:12px;line-height:12px;color:#111">CPT</div><div class="t" style="left:59px;top:150px;font-size:12px;line-height:12px;color:#111">SPT</div><div class="t" style="left:59px;top:174px;font-size:12px;line-height:12px;color:#111">Geometric properties</div><div class="t" style="left:59px;top:198px;font-size:12px;line-height:12px;color:#111">Grain size distribution</div><div class="t" style="left:59px;top:222px;font-size:12px;line-height:12px;color:#111">Atterberg limits</div><div class="t" style="left:59px;top:246px;font-size:12px;line-height:12px;color:#111">Sand equivalent</div><div class="t" style="left:59px;top:270px;font-size:12px;line-height:12px;color:#111">Micro-Deval</div><div class="t" style="left:59px;top:294px;font-size:12px;line-height:12px;color:#111">Los-Angeles</div><div class="t" style="left:59px;top:318px;font-size:12px;line-height:12px;color:#111">Proctor</div><div class="t" style="left:59px;top:342px;font-size:12px;line-height:12px;color:#111">CBR</div><div class="t" style="left:59px;top:366px;font-size:12px;line-height:12px;color:#111">CBR Group</div><div class="t" style="left:59px;top:390px;font-size:12px;line-height:12px;color:#111">Direct shear test</div><div class="t" style="left:59px;top:414px;font-size:12px;line-height:12px;color:#111">Oedometer test</div><div class="t" style="left:59px;top:438px;font-size:12px;line-height:12px;color:#111">Concrete Mix Design-ACI</div><div class="t" style="left:59px;top:462px;font-size:12px;line-height:12px;color:#111">Concrete Mix Design-Dreux- Gorisse</div><div class="t" style="left:59px;top:486px;font-size:12px;line-height:12px;color:#111">Concrete Mix Design-Bolomey</div><div class="t" style="left:59px;top:510px;font-size:12px;line-height:12px;color:#111">Concrete Mix Design-Faury</div><div class="t" style="left:59px;top:534px;font-size:12px;line-height:12px;color:#111">Compression of concrete</div><div class="t" style="left:59px;top:558px;font-size:12px;line-height:12px;color:#111">Ultrasonic Testing</div><div class="t" style="left:59px;top:582px;font-size:12px;line-height:12px;color:#111">Combined method</div><div class="t" style="left:59px;top:606px;font-size:12px;line-height:12px;color:#111">Bitumen Extraction</div><div class="t" style="left:59px;top:630px;font-size:12px;line-height:12px;color:#111">Bulk density of bituminous specimen</div><div class="t" style="left:59px;top:654px;font-size:12px;line-height:12px;color:#111">In-situ density</div><div class="t" style="left:59px;top:678px;font-size:12px;line-height:12px;color:#111">Footings C-&phi;</div></div>
<div class="b" style="left:6px;top:847px;width:472px;height:192px;background:#e3e3e3;border:1px solid #646464"></div>
<svg style="left:17px;top:863px" width="32" height="32" viewBox="0 0 32 32">
<defs><linearGradient id="rg879" x1="1" y1="0" x2="0" y2="1"><stop offset="0" stop-color="#c2f245"/><stop offset="0.55" stop-color="#62c040"/><stop offset="1" stop-color="#1c9a3c"/></linearGradient></defs>
<circle cx="16" cy="16" r="16" fill="url(#rg879)"/>
<rect x="5" y="7" width="22" height="18.5" rx="3" fill="#fbfde6"/>
<rect x="9" y="11" width="15" height="13" rx="1" fill="#2aa044"/>
<rect x="10.5" y="13.5" width="3" height="3.5" fill="#b5ec48"/><rect x="18.5" y="13.5" width="3" height="3.5" fill="#b5ec48"/><rect x="14" y="19.5" width="5" height="1" fill="#0d7a2a"/><rect x="15" y="20.5" width="3" height="1" fill="#b5ec48"/>
<rect x="13" y="8" width="6" height="1.5" fill="#8fd850"/>
</svg>
<svg style="left:17px;top:905px" width="32" height="32" viewBox="0 0 32 32">
<defs><linearGradient id="rg921" x1="1" y1="0" x2="0" y2="1"><stop offset="0" stop-color="#c2f245"/><stop offset="0.55" stop-color="#62c040"/><stop offset="1" stop-color="#1c9a3c"/></linearGradient></defs>
<circle cx="16" cy="16" r="16" fill="url(#rg921)"/>
<rect x="5" y="7" width="22" height="18.5" rx="3" fill="#fbfde6"/>
<rect x="9" y="11" width="15" height="13" rx="1" fill="#2aa044"/>
<rect x="10.5" y="13.5" width="3" height="3.5" fill="#b5ec48"/><rect x="18.5" y="13.5" width="3" height="3.5" fill="#b5ec48"/><rect x="14" y="19.5" width="5" height="1" fill="#0d7a2a"/><rect x="15" y="20.5" width="3" height="1" fill="#b5ec48"/>
<rect x="13" y="8" width="6" height="1.5" fill="#8fd850"/>
</svg>
<div class="b" style="left:57px;top:863px;width:46px;height:26px;background:#c2d5c2;border:1px solid #158a15"></div>
<div class="t" style="left:62px;top:868px;font-size:14px;line-height:14px;color:#1a1a1a;">Hello</div>
<div class="b" style="left:57px;top:905px;width:305px;height:77px;background:#c2d5c2;border:1px solid #158a15"></div>
<div class="t" style="left:62px;top:910px;font-size:14px;line-height:14px;color:#1a1a1a;">My name is Nourine, I can help you with:</div>
<div class="t" style="left:62px;top:926px;font-size:14px;line-height:14px;color:#1a1a1a;">1- Send data</div>
<div class="t" style="left:62px;top:943px;font-size:14px;line-height:14px;color:#1a1a1a;">2- Receive data</div>
<div class="t" style="left:62px;top:960px;font-size:14px;line-height:14px;color:#1a1a1a;">3- Calculate the equivalent dynamic resistance</div>
<div class="b" style="left:6px;top:1044px;width:472px;height:27px;background:#fff;border:1px solid #646464"></div>
<div class="b" style="left:488px;top:145px;width:1432px;height:932px;background:#e3e3e3;border:1px solid #646464"></div>
<div class="b" style="left:807px;top:151px;width:795px;height:925px;background:#fff;border:1px solid #646464;border-bottom:none"></div>
<div class="b" style="left:1902px;top:146px;width:17px;height:930px;background:#efefef;border-left:1px solid #fff"></div>
<div class="b" style="left:1910px;top:163px;width:2px;height:812px;background:#858585"></div>
<div class="b" style="left:0px;top:1077px;width:1920px;height:1px;background:#fcfcfc"></div>
<div class="b" style="left:0px;top:1078px;width:1920px;height:1px;background:#c4c4c4"></div>
<div class="b" style="left:0px;top:1079px;width:1920px;height:1px;background:#efefef"></div>
<div class="b" style="left:473px;top:339px;width:974px;height:395px;background:#f0f0f0;border-radius:8px;box-shadow:0 12px 40px rgba(0,0,0,0.28), 0 0 10px rgba(0,0,0,0.08);overflow:hidden">
<div class="b" style="left:0;top:0;width:974px;height:31px;background:#f3f3f3"></div>
<svg style="left:9px;top:7px" width="17" height="17" viewBox="0 0 17 17"><rect x="0" y="0" width="16" height="16" fill="#9de53c"/><rect x="5" y="5" width="8" height="6" fill="#b6f25a"/><path d="M12.8 3.5 H4 V12.5 H12.8" fill="none" stroke="#f2532e" stroke-width="2" stroke-linecap="round" stroke-linejoin="round"/></svg>
<div class="t" style="left:12px;top:50px;font-size:12px;line-height:12px;color:#1a1a1a">Name</div>
<div class="t" style="left:12px;top:82px;font-size:12px;line-height:12px;color:#1a1a1a">Layer</div>
<div class="t" style="left:12px;top:112px;font-size:12px;line-height:12px;color:#1a1a1a">Test</div>
<div class="t" style="left:12px;top:142px;font-size:12px;line-height:12px;color:#1a1a1a">Method</div>
<div class="b" style="left:12px;top:177px;width:100px;height:137px;border:1px solid #d8d8d8"></div>
<div class="t" style="left:21px;top:171px;font-size:12px;line-height:12px;color:#1a1a1a;background:#f0f0f0;padding:0 1px">Data</div>
<div class="t" style="left:22px;top:197px;font-size:12px;line-height:12px;color:#1a1a1a">&phi;</div>
<div class="t" style="left:22px;top:226px;font-size:12px;line-height:12px;color:#1a1a1a">C</div>
<div class="t" style="left:22px;top:258px;font-size:12px;line-height:12px;color:#1a1a1a">&gamma;<sub style="font-size:9px">1</sub></div>
<div class="t" style="left:22px;top:288px;font-size:12px;line-height:12px;color:#1a1a1a">&gamma;<sub style="font-size:9px">2</sub></div>
<div class="b" style="left:12px;top:329px;width:100px;height:46px;border:1px solid #d8d8d8"></div>
<div class="t" style="left:21px;top:323px;font-size:12px;line-height:12px;color:#1a1a1a;background:#f0f0f0;padding:0 1px">Parameters</div>
<div class="t" style="left:22px;top:348px;font-size:12px;line-height:12px;color:#1a1a1a">&gamma;<sub style="font-size:9px">R</sub></div>
<svg style="left:953px;top:10px" width="11" height="11" viewBox="0 0 11 11"><path d="M0.5 0.5 L10.5 10.5 M10.5 0.5 L0.5 10.5" stroke="#777" stroke-width="1"/></svg>
<div class="b" style="left:907px;top:43px;width:52px;height:272px;background:#e3e3e3;border:1px solid #646464"></div>
<div class="b" style="left:907px;top:324px;width:51px;height:25px;background:#f7f7f7;border:1px solid #cfcfcf;border-radius:4px"></div>
<div class="b" style="left:907px;top:353px;width:51px;height:25px;background:#f7f7f7;border:1px solid #cfcfcf;border-radius:4px"></div>
<div class="b" style="left:0;top:0;width:974px;height:395px;border:1px solid #a8a8a8;border-radius:8px"></div>
</div>
<div class="b" style="left:506px;top:110px;width:907px;height:713px;background:#f0f0f0;border-radius:8px;box-shadow:0 20px 48px rgba(0,0,0,0.29), 0 0 16px rgba(0,0,0,0.10);overflow:hidden">
<div class="b" style="left:0;top:0;width:907px;height:31px;background:#eef3f9"></div>
<svg style="left:9px;top:8px" width="17" height="15" viewBox="0 0 17 15"><rect x="0" y="0" width="16" height="14" fill="#9de53c"/><rect x="5" y="4" width="8" height="6" fill="#b6f25a"/><path d="M12.8 3 H4 V11 H12.8" fill="none" stroke="#f2532e" stroke-width="2" stroke-linecap="round" stroke-linejoin="round"/></svg>
<div class="t" style="left:31px;top:10px;font-size:12px;line-height:12px;color:#1a1a1a">Geometric properties</div>
<svg style="left:885px;top:9px" width="12" height="12" viewBox="0 0 12 12"><path d="M1 1 L11 11 M11 1 L1 11" stroke="#111" stroke-width="1.2"/></svg>
<div class="b" style="left:4px;top:42px;width:897px;height:630px;border:1px solid #d9d9d9"></div>
<div class="b" style="left:9px;top:49px;width:874px;height:498px;background:#fff;border:1px solid #646464"></div>
<svg style="left:9px;top:49px" width="875" height="498" viewBox="515 159 875 498"><path d="M573 187.5 L604 187.5" stroke="#000" stroke-width="1" fill="none"/><path d="M604 187.5 L728 187.5" stroke="#000" stroke-width="1" stroke-dasharray="3.5 3.5" fill="none"/><path d="M728 187.5 L864.5 187.5" stroke="#000" stroke-width="1" fill="none"/><path d="M585.5 190 L585.5 293" stroke="#000" stroke-width="1" fill="none"/><path d="M585.50 187.50 L591.00 198.50 L580.00 198.50 Z" fill="#000"/><path d="M585.50 295.50 L580.00 284.50 L591.00 284.50 Z" fill="#000"/><path d="M575 295.5 L601 295.5" stroke="#000" stroke-width="1" fill="none"/><path d="M601 295.5 L673 295.5" stroke="#000" stroke-width="1" stroke-dasharray="3.5 3.5" fill="none"/><path d="M673 295.5 L716 295.5" stroke="#000" stroke-width="1" fill="none"/><path d="M687 283.5 H702.5 L694.75 295 Z" stroke="#000" stroke-width="1" fill="none"/><path d="M681 298.5 L709 298.5" stroke="#000" stroke-width="1" fill="none"/><path d="M687 301.5 L702 301.5" stroke="#000" stroke-width="1" fill="none"/><path d="M690 304.5 L699 304.5" stroke="#000" stroke-width="1" fill="none"/><path d="M693 307.5 L697 307.5" stroke="#000" stroke-width="1" fill="none"/><path d="M728 187.5 L516 428.5" stroke="#000" stroke-width="1" fill="none"/><path d="M516 428.5 L668 428.5" stroke="#000" stroke-width="1" fill="none"/><path d="M535.1 406.2 A29 29 0 0 1 545 428.5" stroke="#000" stroke-width="1" fill="none"/><text x="549" y="420" font-size="17" font-family="Liberation Sans" fill="#000">&beta;</text><text x="593" y="249" font-size="15.5" font-family="Liberation Sans" fill="#000">H</text><text x="605" y="253" font-size="11" font-family="Liberation Sans" fill="#000">W</text><path d="M740.5 190 L740.5 327" stroke="#000" stroke-width="1" fill="none"/><path d="M740.50 187.50 L746.00 198.50 L735.00 198.50 Z" fill="#000"/><path d="M740.50 329.50 L735.00 318.50 L746.00 318.50 Z" fill="#000"/><path d="M731 329.5 L758 329.5" stroke="#000" stroke-width="1" fill="none"/><text x="744" y="267" font-size="17" font-family="Liberation Sans" fill="#000">D</text><path d="M864.5 159 V258.5 H763.5 V329.5 H1034.5 V258.5 H935.5 V159" stroke="#000" stroke-width="1" fill="none"/><path d="M935.5 187.5 L1086 187.5" stroke="#000" stroke-width="1" fill="none"/><path d="M900.5 160 L900.5 327" stroke="#000" stroke-width="1" stroke-dasharray="2.5 4.5" fill="none"/><path d="M950.5 227 L950.5 320" stroke="#000" stroke-width="1" fill="none"/><path d="M950.50 329.50 L945.50 318.50 L955.50 318.50 Z" fill="#000"/><path d="M900.5 293.5 L950.5 293.5" stroke="#000" stroke-width="1" fill="none"/><text x="918" y="289" font-size="18" font-family="Liberation Sans" fill="#000">e</text><text x="956" y="240" font-size="16.5" font-family="Liberation Sans" fill="#000">V</text><path d="M596 340.5 L761 340.5" stroke="#000" stroke-width="1" fill="none"/><path d="M594.00 340.50 L605.00 335.00 L605.00 346.00 Z" fill="#000"/><path d="M763.00 340.50 L752.00 346.00 L752.00 335.00 Z" fill="#000"/><path d="M763.5 331 L763.5 370" stroke="#000" stroke-width="1" fill="none"/><text x="670" y="360" font-size="18" font-family="Liberation Sans" fill="#000">d</text><path d="M765 358.5 L1032 358.5" stroke="#000" stroke-width="1" fill="none"/><path d="M763.50 358.50 L774.50 353.00 L774.50 364.00 Z" fill="#000"/><path d="M1034.00 358.50 L1023.00 364.00 L1023.00 353.00 Z" fill="#000"/><path d="M1034.5 349 L1034.5 368" stroke="#000" stroke-width="1" fill="none"/><text x="884" y="382" font-size="17.5" font-family="Liberation Sans" fill="#000">B</text><path d="M818.5 481 V409.5 H993.5 V481" stroke="#000" stroke-width="1" fill="none"/><path d="M905.5 409.5 L905.5 460.5" stroke="#000" stroke-width="1" fill="none"/><path d="M835 460.5 L993 460.5" stroke="#000" stroke-width="1" stroke-dasharray="3.5 3.5" fill="none"/><path d="M834.8 459.4 L832.3 440.6 L983.3 419.5 L985.7 438.6 Z" fill="#a0a0a0" stroke="#111" stroke-width="1.8"/><path d="M905.5 420 L905.5 460.5" stroke="#000" stroke-width="1" fill="none"/><path d="M947 445 Q951 451 950 459" stroke="#000" stroke-width="0.8" fill="none"/><text x="956" y="456" font-size="16" font-family="Liberation Sans" fill="#000">&alpha;</text><path d="M1096.5 159 L1096.5 656" stroke="#000" stroke-width="1" fill="none"/><path d="M515 481.5 L1096.5 481.5" stroke="#000" stroke-width="1" fill="none"/><path d="M1096.5 338.5 L1388 338.5" stroke="#000" stroke-width="1" fill="none"/><path d="M1096.5 520.5 L1388 520.5" stroke="#000" stroke-width="1" fill="none"/><path d="M631.5 571.5 V494.5 H665.5 V571.5 H745.5 V605.5 H550.5 V571.5 Z" stroke="#000" stroke-width="1" fill="none"/><path d="M649.5 515 L649.5 587" stroke="#000" stroke-width="1" fill="none"/><path d="M649.50 594.00 L646.00 586.00 L653.00 586.00 Z" fill="#000"/><path d="M729 516 L659 586" stroke="#000" stroke-width="1" fill="none"/><path d="M653.70 590.50 L658.30 579.54 L664.66 585.90 Z" fill="#000"/><path d="M732 595.5 L657 595.5" stroke="#000" stroke-width="1" fill="none"/><path d="M650.00 595.50 L658.00 591.75 L658.00 599.25 Z" fill="#000"/><text x="633" y="528" font-size="16.5" font-family="Liberation Sans" fill="#000">V</text><text x="732" y="528" font-size="16.5" font-family="Liberation Sans" fill="#000">V</text><text x="742" y="530" font-size="11" font-family="Liberation Sans" fill="#000">d</text><text x="719" y="589" font-size="16" font-family="Liberation Sans" fill="#000">H</text><path d="M830.5 511.5 H1049.5 V595.5 H830.5 Z" stroke="#000" stroke-width="1" fill="none"/><path d="M941.5 512 L941.5 592" stroke="#000" stroke-width="1" stroke-dasharray="3.5 3.5" fill="none"/><path d="M835 555.5 L941 555.5" stroke="#000" stroke-width="1" stroke-dasharray="3.5 3.5" fill="none"/><path d="M998.6 555.5 L1049 555.5" stroke="#000" stroke-width="1" stroke-dasharray="3.5 3.5" fill="none"/><path d="M941 555.5 L998.6 555.5" stroke="#000" stroke-width="1" fill="none"/><path d="M947 550 L994 503" stroke="#000" stroke-width="1" fill="none"/><path d="M941.00 556.00 L944.89 545.75 L951.25 552.11 Z" fill="#000"/><path d="M949 547.5 A11 11 0 0 1 953 555.5" stroke="#000" stroke-width="0.8" fill="none"/><text x="960" y="552" font-size="16" font-family="Liberation Sans" fill="#000">&theta;</text><text x="986" y="529" font-size="16" font-family="Liberation Sans" fill="#000">H</text><path d="M1062.5 520 L1062.5 587" stroke="#000" stroke-width="1" fill="none"/><path d="M1062.50 512.00 L1067.50 522.00 L1057.50 522.00 Z" fill="#000"/><path d="M1062.50 595.00 L1057.50 585.00 L1067.50 585.00 Z" fill="#000"/><path d="M1053 511.5 L1073 511.5" stroke="#000" stroke-width="1" fill="none"/><path d="M1053 595.5 L1073 595.5" stroke="#000" stroke-width="1" fill="none"/><text x="1070" y="558" font-size="16" font-family="Liberation Sans" fill="#000">L</text><path d="M838 608.5 L1040 608.5" stroke="#000" stroke-width="1" fill="none"/><path d="M830.50 608.50 L840.50 603.50 L840.50 613.50 Z" fill="#000"/><path d="M1048.50 608.50 L1038.50 613.50 L1038.50 603.50 Z" fill="#000"/><path d="M830.5 599 L830.5 618" stroke="#000" stroke-width="1" fill="none"/><path d="M1048.5 599 L1048.5 618" stroke="#000" stroke-width="1" fill="none"/><text x="940" y="631" font-size="17" font-family="Liberation Sans" fill="#000">B</text><path d="M1123.5 212.5 H1301.5 V288.5 H1123.5 Z" stroke="#000" stroke-width="1" fill="none"/><path d="M1167.5 185.5 H1345.5 V261.5 H1167.5 Z" stroke="#000" stroke-width="1" fill="none"/><path d="M1123.5 212.5 L1167.5 185.5" stroke="#000" stroke-width="1" fill="none"/><path d="M1301.5 212.5 L1345.5 185.5" stroke="#000" stroke-width="1" fill="none"/><path d="M1123.5 288.5 L1167.5 261.5" stroke="#000" stroke-width="1" fill="none"/><path d="M1301.5 288.5 L1345.5 261.5" stroke="#000" stroke-width="1" fill="none"/><path d="M1116 202.5 L1159.5 178.8" stroke="#000" stroke-width="0.9" fill="none"/><path d="M1114 198.5 L1118.5 206.5" stroke="#000" stroke-width="0.8" fill="none"/><path d="M1157.5 174.8 L1162 182.8" stroke="#000" stroke-width="0.8" fill="none"/><text x="1128" y="184" font-size="16" font-family="Liberation Sans" fill="#000">L</text><path d="M1131 304.5 L1294 304.5" stroke="#000" stroke-width="1" fill="none"/><path d="M1123.50 304.50 L1133.50 299.50 L1133.50 309.50 Z" fill="#000"/><path d="M1301.50 304.50 L1291.50 309.50 L1291.50 299.50 Z" fill="#000"/><path d="M1123.5 295 L1123.5 314" stroke="#000" stroke-width="1" fill="none"/><path d="M1301.5 295 L1301.5 314" stroke="#000" stroke-width="1" fill="none"/><text x="1203" y="327" font-size="17" font-family="Liberation Sans" fill="#000">B</text><path d="M1121.5 382.5 H1340.5 V466.5 H1121.5 Z" stroke="#000" stroke-width="1" fill="none"/><path d="M1232.5 383 L1232.5 463" stroke="#000" stroke-width="1" stroke-dasharray="3.5 3.5" fill="none"/><path d="M1126 426.5 L1340 426.5" stroke="#000" stroke-width="1" stroke-dasharray="3.5 3.5" fill="none"/><path d="M1260.5 348 L1260.5 398" stroke="#000" stroke-width="1" fill="none"/><path d="M1260.50 404.00 L1257.00 397.00 L1264.00 397.00 Z" fill="#000"/><ellipse cx="1260.5" cy="408.5" rx="3" ry="3.8" fill="#000"/><path d="M1233 408.5 L1260.5 408.5" stroke="#000" stroke-width="1" fill="none"/><path d="M1260.5 408.5 L1260.5 426.5" stroke="#000" stroke-width="1" fill="none"/><text x="1266" y="359" font-size="15.5" font-family="Liberation Sans" fill="#000">H</text><text x="1240" y="401" font-size="16.5" font-family="Liberation Sans" fill="#000">e</text><text x="1250" y="404" font-size="10.5" font-family="Liberation Sans" fill="#000">B</text><text x="1264" y="421" font-size="16.5" font-family="Liberation Sans" fill="#000">e</text><text x="1274" y="423" font-size="10.5" font-family="Liberation Sans" fill="#000">L</text><path d="M1353.5 391 L1353.5 458" stroke="#000" stroke-width="1" fill="none"/><path d="M1353.50 383.00 L1358.50 393.00 L1348.50 393.00 Z" fill="#000"/><path d="M1353.50 466.00 L1348.50 456.00 L1358.50 456.00 Z" fill="#000"/><path d="M1344 382.5 L1364 382.5" stroke="#000" stroke-width="1" fill="none"/><path d="M1344 466.5 L1364 466.5" stroke="#000" stroke-width="1" fill="none"/><text x="1360" y="429" font-size="16" font-family="Liberation Sans" fill="#000">L</text><path d="M1129 479.5 L1331 479.5" stroke="#000" stroke-width="1" fill="none"/><path d="M1121.50 479.50 L1131.50 474.50 L1131.50 484.50 Z" fill="#000"/><path d="M1339.00 479.50 L1329.00 484.50 L1329.00 474.50 Z" fill="#000"/><path d="M1121.5 470 L1121.5 489" stroke="#000" stroke-width="1" fill="none"/><path d="M1339.5 470 L1339.5 489" stroke="#000" stroke-width="1" fill="none"/><text x="1231" y="502" font-size="17" font-family="Liberation Sans" fill="#000">B</text><circle cx="1236.5" cy="590.5" r="61.5" fill="none" stroke="#000" stroke-width="1"/><path d="M1236.5 530 L1236.5 652" stroke="#000" stroke-width="1" stroke-dasharray="3.5 3.5" fill="none"/><path d="M1271.5 525 L1271.5 566" stroke="#000" stroke-width="1" fill="none"/><path d="M1271.50 571.00 L1268.00 564.00 L1275.00 564.00 Z" fill="#000"/><ellipse cx="1271.5" cy="576.8" rx="3" ry="4.2" fill="#000"/><path d="M1236.5 588.5 L1273 588.5" stroke="#000" stroke-width="1" fill="none"/><path d="M1236.5 586 L1235 591" stroke="#000" stroke-width="0.8" fill="none"/><path d="M1273 586 L1271 591" stroke="#000" stroke-width="0.8" fill="none"/><text x="1247" y="601" font-size="17" font-family="Liberation Sans" fill="#000">e</text><text x="1275" y="536" font-size="15.5" font-family="Liberation Sans" fill="#000">H</text></svg>
<div class="t" style="left:11px;top:567px;font-size:12px;line-height:12px;color:#1a1a1a;">Type</div>
<div class="b" style="left:69px;top:561px;width:170px;height:22px;background:#fff;border:1px solid #d5d5d5;border-radius:3px"></div>
<div class="t" style="left:72px;top:566px;font-size:12px;line-height:12px;color:#1a1a1a;letter-spacing:-0.08px">Isolated Footings-Rectangul</div>
<svg style="left:224px;top:568px" width="11" height="7" viewBox="0 0 11 7"><path d="M1 1 L5.5 5.5 L10 1" fill="none" stroke="#333" stroke-width="1"/></svg>
<div class="b" style="left:12px;top:592px;width:13px;height:13px;background:#005fb8;border-radius:3px"></div>
<svg style="left:12px;top:592px" width="13" height="13" viewBox="0 0 13 13"><path d="M3.2 6.8 L5.5 9 L10 4.2" fill="none" stroke="#fff" stroke-width="1.1"/></svg>
<div class="t" style="left:29px;top:592px;font-size:12px;line-height:12px;color:#1a1a1a;">Embankment</div>
<div class="b" style="left:12px;top:619px;width:13px;height:13px;background:#005fb8;border-radius:3px"></div>
<svg style="left:12px;top:619px" width="13" height="13" viewBox="0 0 13 13"><path d="M3.2 6.8 L5.5 9 L10 4.2" fill="none" stroke="#fff" stroke-width="1.1"/></svg>
<div class="t" style="left:29px;top:619px;font-size:12px;line-height:12px;color:#1a1a1a;">Inclined load</div>
<div class="b" style="left:12px;top:644px;width:13px;height:13px;background:#005fb8;border-radius:3px"></div>
<svg style="left:12px;top:644px" width="13" height="13" viewBox="0 0 13 13"><path d="M3.2 6.8 L5.5 9 L10 4.2" fill="none" stroke="#fff" stroke-width="1.1"/></svg>
<div class="t" style="left:29px;top:644px;font-size:12px;line-height:12px;color:#1a1a1a;">Eccentric load</div>
<div class="b" style="left:243px;top:559px;width:136px;height:98px;border:1px solid #d9d9d9"></div>
<div class="b" style="left:384px;top:559px;width:124px;height:98px;border:1px solid #d9d9d9"></div>
<div class="b" style="left:512px;top:559px;width:126px;height:98px;border:1px solid #d9d9d9"></div>
<div class="b" style="left:644px;top:559px;width:239px;height:98px;border:1px solid #d9d9d9"></div>
<div class="b" style="left:651px;top:552px;width:28px;height:12px;background:#f0f0f0"></div>
<div class="t" style="left:653px;top:553px;font-size:12px;line-height:12px;color:#1a1a1a;">Data</div>
<div class="t" style="left:265px;top:574px;font-size:12px;line-height:12px;color:#1a1a1a;">&beta; (&deg;)</div>
<div class="b" style="left:317px;top:568px;width:51px;height:22px;background:#fff;border-radius:3px;border-bottom:1px solid #868686;box-shadow:0 0 0 0.5px #e5e5e5"></div>
<div class="t" style="left:319px;top:572px;font-size:12px;line-height:12px;color:#1a1a1a;">0</div>
<div class="t" style="left:265px;top:604px;font-size:12px;line-height:12px;color:#1a1a1a;">d (m)</div>
<div class="b" style="left:317px;top:598px;width:51px;height:22px;background:#fff;border-radius:3px;border-bottom:1px solid #868686;box-shadow:0 0 0 0.5px #e5e5e5"></div>
<div class="t" style="left:319px;top:602px;font-size:12px;line-height:12px;color:#1a1a1a;">0</div>
<div class="t" style="left:265px;top:632px;font-size:12px;line-height:12px;color:#1a1a1a;">De (m)</div>
<div class="b" style="left:317px;top:628px;width:51px;height:22px;background:#fff;border-radius:3px;border-bottom:1px solid #868686;box-shadow:0 0 0 0.5px #e5e5e5"></div>
<div class="t" style="left:319px;top:632px;font-size:12px;line-height:12px;color:#1a1a1a;">0</div>
<div class="t" style="left:393px;top:574px;font-size:12px;line-height:12px;color:#1a1a1a;">H (kN)</div>
<div class="b" style="left:440px;top:568px;width:55px;height:22px;background:#fff;border-radius:3px;border-bottom:1px solid #868686;box-shadow:0 0 0 0.5px #e5e5e5"></div>
<div class="t" style="left:442px;top:572px;font-size:12px;line-height:12px;color:#1a1a1a;">0</div>
<div class="t" style="left:393px;top:604px;font-size:12px;line-height:12px;color:#1a1a1a;">V (kN)</div>
<div class="b" style="left:440px;top:598px;width:55px;height:22px;background:#fff;border-radius:3px;border-bottom:1px solid #868686;box-shadow:0 0 0 0.5px #e5e5e5"></div>
<div class="t" style="left:442px;top:602px;font-size:12px;line-height:12px;color:#1a1a1a;">0</div>
<div class="t" style="left:393px;top:632px;font-size:12px;line-height:12px;color:#1a1a1a;">&theta; (&deg;)</div>
<div class="b" style="left:440px;top:628px;width:55px;height:22px;background:#fff;border-radius:3px;border-bottom:1px solid #868686;box-shadow:0 0 0 0.5px #e5e5e5"></div>
<div class="t" style="left:442px;top:632px;font-size:12px;line-height:12px;color:#1a1a1a;">0</div>
<div class="t" style="left:523px;top:574px;font-size:12px;line-height:12px;color:#1a1a1a;">eB (m)</div>
<div class="b" style="left:572px;top:568px;width:51px;height:22px;background:#fff;border-radius:3px;border-bottom:1px solid #868686;box-shadow:0 0 0 0.5px #e5e5e5"></div>
<div class="t" style="left:574px;top:572px;font-size:12px;line-height:12px;color:#1a1a1a;">0</div>
<div class="t" style="left:523px;top:604px;font-size:12px;line-height:12px;color:#1a1a1a;">eL (m)</div>
<div class="b" style="left:572px;top:598px;width:51px;height:22px;background:#fff;border-radius:3px;border-bottom:1px solid #868686;box-shadow:0 0 0 0.5px #e5e5e5"></div>
<div class="t" style="left:574px;top:602px;font-size:12px;line-height:12px;color:#1a1a1a;">0</div>
<div class="t" style="left:653px;top:572px;font-size:12px;line-height:12px;color:#1a1a1a;">D (m)</div>
<div class="b" style="left:703px;top:567px;width:54px;height:22px;background:#fff;border-radius:3px;border-bottom:1px solid #868686;box-shadow:0 0 0 0.5px #e5e5e5"></div>
<div class="t" style="left:705px;top:571px;font-size:12px;line-height:12px;color:#1a1a1a;">2</div>
<div class="t" style="left:653px;top:602px;font-size:12px;line-height:12px;color:#1a1a1a;">B (m)</div>
<div class="b" style="left:703px;top:597px;width:54px;height:22px;background:#fff;border-radius:3px;border-bottom:1px solid #868686;box-shadow:0 0 0 0.5px #e5e5e5"></div>
<div class="t" style="left:705px;top:601px;font-size:12px;line-height:12px;color:#1a1a1a;">3</div>
<div class="t" style="left:653px;top:632px;font-size:12px;line-height:12px;color:#1a1a1a;">L (m)</div>
<div class="b" style="left:703px;top:627px;width:54px;height:22px;background:#fff;border-radius:3px;border-bottom:1px solid #868686;box-shadow:0 0 0 0.5px #e5e5e5"></div>
<div class="t" style="left:705px;top:631px;font-size:12px;line-height:12px;color:#1a1a1a;">4</div>
<div class="t" style="left:768px;top:574px;font-size:12px;line-height:12px;color:#1a1a1a;">Hw (m)</div>
<div class="b" style="left:819px;top:567px;width:52px;height:22px;background:#fff;border-radius:3px;border-bottom:1px solid #868686;box-shadow:0 0 0 0.5px #e5e5e5"></div>
<div class="t" style="left:821px;top:571px;font-size:12px;line-height:12px;color:#1a1a1a;">9999</div>
<div class="t" style="left:768px;top:604px;font-size:12px;line-height:12px;color:#1a1a1a;">&alpha; (&deg;)</div>
<div class="b" style="left:819px;top:597px;width:52px;height:22px;background:#fff;border-radius:3px;border-bottom:1px solid #868686;box-shadow:0 0 0 0.5px #e5e5e5"></div>
<div class="t" style="left:821px;top:601px;font-size:12px;line-height:12px;color:#1a1a1a;">0</div>
<div class="b" style="left:13px;top:678px;width:262px;height:30px;background:#fdfdfd;border:1px solid #d0d0d0;border-bottom-color:#bcbcbc;border-radius:4px"></div>
<div class="b" style="left:285px;top:678px;width:308px;height:30px;background:#fdfdfd;border:1px solid #d0d0d0;border-bottom-color:#bcbcbc;border-radius:4px"></div>
<div class="t" style="left:13px;width:262px;text-align:center;top:686px;font-size:12px;line-height:12px;color:#1a1a1a">Validate</div>
<div class="t" style="left:285px;width:308px;text-align:center;top:686px;font-size:12px;line-height:12px;color:#1a1a1a;letter-spacing:-0.8px">Close</div>
<div class="b" style="left:0;top:0;width:907px;height:713px;border:1px solid #a3a3a3;border-radius:8px"></div>
</div>
</body></html>
